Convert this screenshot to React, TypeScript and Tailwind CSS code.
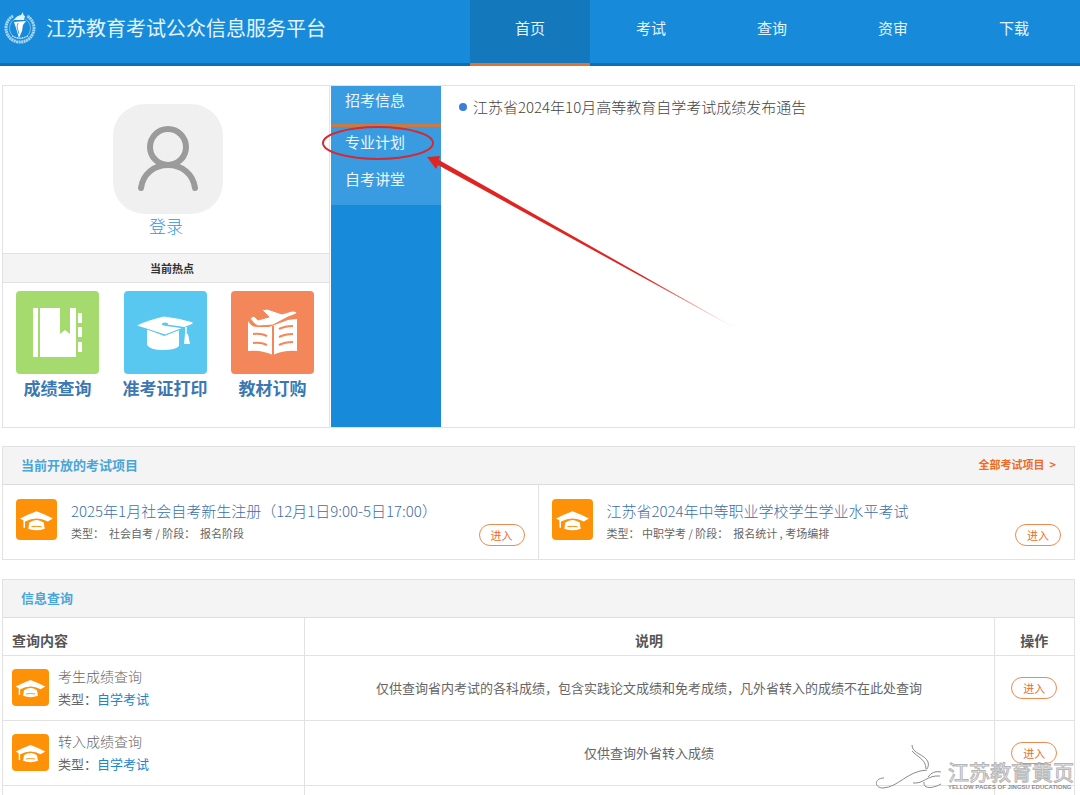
import clsx from "clsx";

type IconProps = { className?: string };

const navItems = ["首页", "考试", "查询", "资审", "下载"];

const sideItems = ["招考信息", "专业计划", "自考讲堂"];

const projects = [
  {
    title: "2025年1月社会自考新生注册（12月1日9:00-5日17:00）",
    kind: " 社会自考",
    stage: "报名阶段",
  },
  {
    title: "江苏省2024年中等职业学校学生学业水平考试",
    kind: "中职学考",
    stage: "报名统计 , 考场编排",
  },
];

const queries = [
  {
    name: "考生成绩查询",
    note: "仅供查询省内考试的各科成绩，包含实践论文成绩和免考成绩，凡外省转入的成绩不在此处查询",
  },
  { name: "转入成绩查询", note: "仅供查询外省转入成绩" },
];

function Emblem({ className }: IconProps) {
  return (
    <svg viewBox="0 0 32 34" className={className} fill="none" aria-hidden="true">
      <path d="M9 5A14 14 0 1 0 23 5" stroke="#a9d6f5" strokeWidth="3" strokeDasharray="2 0.5" />
      <path d="M11 8A10.500 10.500 0 1 0 21 8" stroke="#7dbdec" strokeWidth="1" />
      <path d="M8 25q8 4 16 0" stroke="#cfe9fb" strokeWidth="1.200" strokeDasharray="1.500 1" />
      <path d="M10 11l12-1-3 4-1 6-3 7-3-10z" fill="#fff" />
      <path d="M14 12l-1 4 2 7" stroke="#178bda" strokeWidth="0.800" />
      <path d="M10 9q2-4 7-5l2-3q0 4 2 4l-1 4z" fill="#e3f3fd" />
    </svg>
  );
}

function UserIcon({ className }: IconProps) {
  return (
    <svg viewBox="0 0 60 66" className={className} fill="none" stroke="#9b9b9b" strokeWidth="6" aria-hidden="true">
      <circle cx="30" cy="21" r="18" />
      <path d="M3 62C5 48 16 39 30 39s25 9 27 23" strokeLinecap="round" />
    </svg>
  );
}

function NotebookIcon({ className }: IconProps) {
  return (
    <svg viewBox="0 0 83 83" className={className} fill="#fff" aria-hidden="true">
      <path d="M17 17h5v49h-5zM24 17h20v26l5-4 5 4V17h6v49H24z" />
      <path d="M62 22h4v10h-4zM62 36h4v10h-4zM62 51h4v10h-4z" />
    </svg>
  );
}

function CapIcon({ className }: IconProps) {
  return (
    <svg viewBox="0 0 83 83" className={className} aria-hidden="true">
      <path d="M23 38l17 7 15-6v16q-3 4-16 4t-16-5z" fill="#fff" />
      <path d="M13 34q10-5 27-9 17 2 29 6v2q-12 5-28 11-15-5-28-9z" fill="#fff" stroke="#58c8f0" />
      <path d="M41 34l21 3" stroke="#58c8f0" strokeWidth="1.500" />
      <ellipse cx="41" cy="33" rx="3" ry="1.500" fill="#58c8f0" />
      <path d="M62 36v8" stroke="#fff" strokeWidth="1.500" />
      <path d="M61 43h3l2 10h-6z" fill="#fff" />
    </svg>
  );
}

function BookIcon({ className }: IconProps) {
  return (
    <svg viewBox="0 0 83 83" className={className} aria-hidden="true">
      <path d="M17 30q3 6 9 6h12l19-7 9-1v32q-13-1-24 4-11-5-25-4z" fill="#fff" />
      <path
        d="M42 35v29M22 43q8-1 14 2M22 52q8-1 14 2M62 35q-8 0-14 3M62 43q-8 0-14 3M62 51q-8 0-14 3"
        fill="none"
        stroke="#f4875a"
        strokeWidth="2"
      />
      <path
        d="M19 27l4-2 4 4 11-3-7-7 5-1 15 5 10-3q6 0 4 3l-8 3-15 8-15 1q-5-2-8-8z"
        fill="#fff"
        stroke="#f4875a"
        strokeWidth="1"
      />
    </svg>
  );
}

function CapBadge({ className }: IconProps) {
  return (
    <svg viewBox="0 0 40 40" className={clsx("shrink-0 rounded bg-[#fd9208]", className)} aria-hidden="true">
      <path d="M4 19q8-4 16-7 8 3 16 7l-5 3q-11-6-22 0z" fill="#fff" />
      <path d="M8 20v8" stroke="#fff" strokeWidth="1.500" />
      <path d="M13 23q7-5 14 0l1 6q-8 3-16 0z" fill="#fff" />
      <path d="M15 27q5-1 10 0" fill="none" stroke="#fd9208" />
    </svg>
  );
}

const hotItems = [
  { label: "成绩查询", color: "bg-[#a4da6e]", Icon: NotebookIcon },
  { label: "准考证打印", color: "bg-[#58c8f0]", Icon: CapIcon },
  { label: "教材订购", color: "bg-[#f4875a]", Icon: BookIcon },
];

function EnterButton() {
  return (
    <button className="h-[22px] w-[46px] shrink-0 rounded-full border border-[#ee8a50] text-[11px] leading-4 text-[#ee6a28]">
      进入
    </button>
  );
}

function Header() {
  return (
    <header className="flex h-[66px] justify-between border-b-3 border-[#0f6fb5] bg-[#178bda]">
      <div className="flex h-14 items-center gap-2.5 pl-1">
        <Emblem className="h-[34px] w-8" />
        <h1 className="text-xl text-[#e4f4ff]">江苏教育考试公众信息服务平台</h1>
      </div>
      <nav className="-mb-[3px] flex gap-px pr-1.5">
        {navItems.map((item, i) => (
          <a
            key={item}
            href="#"
            className={clsx(
              "w-[120px] border-b-3 pt-4 text-center text-[15px] leading-6 text-[#e4f4ff]",
              i === 0 ? "border-[#dd7436] bg-[#1478bc]" : "border-transparent",
            )}
          >
            {item}
          </a>
        ))}
      </nav>
    </header>
  );
}

function UserPanel() {
  return (
    <div className="mr-px flex w-[327px] shrink-0 flex-col border-r border-[#e2e2e2]">
      <div className="flex h-[167px] flex-col items-center pt-[18px] pl-1">
        <div className="flex size-[110px] items-center justify-center rounded-[32px] bg-[#f0f0f0]">
          <UserIcon className="h-[66px] w-15" />
        </div>
        <a href="#" className="pr-1 text-[17px] leading-6 font-light text-[#2f96d6]">登录</a>
      </div>
      <h2 className="border-y border-[#e2e2e2] bg-[#f4f4f4] pl-3 text-center text-[11px] leading-7 font-bold text-[#333]">
        当前热点
      </h2>
      <ul className="flex justify-between pt-2 pr-3.5 pl-3">
        {hotItems.map(({ label, color, Icon }) => (
          <li key={label}>
            <a href="#" className="flex w-[85px] flex-col items-center">
              <Icon className={clsx("size-[83px] rounded", color)} />
              <span className="text-[17px] leading-7 font-bold whitespace-nowrap text-[#3b78b2]">{label}</span>
            </a>
          </li>
        ))}
      </ul>
    </div>
  );
}

/* Hand-drawn ring and arrow that point out the plan entry */
function Marker() {
  return (
    <svg viewBox="0 0 420 210" className="pointer-events-none absolute top-10 -left-2.5 h-[210px] w-[420px]" aria-hidden="true">
      <defs>
        <linearGradient id="fade" x1="0" y1="0" x2="1" y2="0">
          <stop offset="0.700" stopColor="#e0241f" />
          <stop offset="1" stopColor="#e0241f" stopOpacity="0.300" />
        </linearGradient>
      </defs>
      <ellipse cx="57" cy="17" rx="55" ry="16" fill="none" stroke="#d42a33" strokeWidth="2" />
      <path d="M106 31l13-1-1 4L414 202 117 39l-2 4z" fill="url(#fade)" />
    </svg>
  );
}

function TopPanel() {
  return (
    <section className="mt-[19px] flex h-[343px] border border-[#e2e2e2]">
      <UserPanel />
      <div className="relative w-[110px] shrink-0 bg-[#178bda]">
        <ul className="bg-[#3a9ce0] pb-1">
          {sideItems.map((item, i) => (
            <li key={item} className={clsx(i === 0 && "border-b-3 border-[#c97a45]")}>
              <a
                href="#"
                className={clsx(
                  "block pl-3.5 text-[15px] text-[#eaf6ff]",
                  i === 0 ? "pb-2.5 leading-7" : "h-[37px] leading-[30px]",
                )}
              >
                {item}
              </a>
            </li>
          ))}
        </ul>
        <Marker />
      </div>
      <ul className="pt-2.5 pl-[18px]">
        <li className="flex items-center gap-1.5">
          <span className="size-2 rounded-full bg-[#3b7ddd]" />
          <a href="#" className="text-[15px] leading-[22px] font-light text-[#444]">
            江苏省2024年10月高等教育自学考试成绩发布通告
          </a>
        </li>
      </ul>
    </section>
  );
}

function SectionTitle({ title, more }: { title: string; more?: string }) {
  return (
    <div className="flex h-[38px] items-center justify-between border-b border-[#dcdcdc] bg-[#f4f4f4] px-[18px] pb-0.5">
      <h2 className="text-[13px] font-bold text-[#4aa5d9]">{title}</h2>
      {more && (
        <a href="#" className="text-[11px] font-bold text-[#ee6a28]">
          {more} &nbsp;&gt;
        </a>
      )}
    </div>
  );
}

function ProjectPanel() {
  return (
    <section className="mt-[18px] border border-[#e2e2e2]">
      <SectionTitle title="当前开放的考试项目" more="全部考试项目" />
      <div className="grid grid-cols-2 divide-x divide-[#e2e2e2]">
        {projects.map((p) => (
          <article key={p.title} className="flex h-[74px] px-[13px] pt-3.5">
            <CapBadge className="size-[41px]" />
            <div className="grow pl-3.5">
              <h3 className="h-[23px] text-[15px] leading-6 font-light">
                <a href="#" className="whitespace-nowrap text-[#3b6fa8]">{p.title}</a>
              </h3>
              <p className="text-[11px] leading-[22px] text-[#666] whitespace-pre">
                类型： {p.kind} / 阶段：  {p.stage}
              </p>
            </div>
            <div className="-ml-10 pt-[22px]">
              <EnterButton />
            </div>
          </article>
        ))}
      </div>
    </section>
  );
}

function QueryPanel() {
  return (
    <section className="mt-[19px] border border-[#e2e2e2]">
      <SectionTitle title="信息查询" />
      <table className="w-full table-fixed border-collapse text-[13px] text-[#666]">
        <colgroup>
          <col className="w-[301px]" />
          <col />
          <col className="w-20" />
        </colgroup>
        <thead>
          <tr className="h-[37px] border-b border-[#e2e2e2] text-sm text-[#555]">
            <th className="border-r border-[#e2e2e2] pt-2 pl-[9px] text-left">查询内容</th>
            <th className="border-r border-[#e2e2e2] pt-2">说明</th>
            <th className="pt-2">操作</th>
          </tr>
        </thead>
        <tbody>
          {queries.map((q) => (
            <tr key={q.name} className="h-[65px] border-b border-[#e2e2e2]">
              <td className="border-r border-[#e2e2e2] pl-[9px]">
                <div className="flex items-center gap-[9px]">
                  <CapBadge className="size-[37px]" />
                  <div className="pb-0.5">
                    <div className="text-sm leading-6 font-light">{q.name}</div>
                    <div className="leading-[22px]">
                      类型：<a href="#" className="text-[#1b86cd]">自学考试</a>
                    </div>
                  </div>
                </div>
              </td>
              <td className="border-r border-[#e2e2e2] text-center">{q.note}</td>
              <td className="text-center">
                <EnterButton />
              </td>
            </tr>
          ))}
          <tr className="h-[65px]">
            <td className="border-r border-[#e2e2e2]" />
            <td className="border-r border-[#e2e2e2]" />
            <td />
          </tr>
        </tbody>
      </table>
    </section>
  );
}

function Watermark() {
  return (
    <div className="pointer-events-none absolute right-1.5 bottom-1 flex items-end gap-1.5">
      <svg viewBox="0 0 72 48" className="h-12 w-18" fill="none" stroke="#8a8a8a" aria-hidden="true">
        <path d="M42 2c0 9 13 9 16 17 1 3 0 5-1 7M42 8c5 6 14 8 14 18" />
        <path d="M14 35C4 35 4 45 13 45c16-1 24-17 44-18M71 29q-8-2-13 5M70 33c-13-1-16 8-27 7M54 39c-1 7 8 7 17 2" />
      </svg>
      <div className="flex flex-col">
        <span className="text-[21px] leading-6 text-white/50 [-webkit-text-stroke:1px_#b4b4b4]">江苏教育黄页</span>
        <span className="font-['Liberation_Sans',sans-serif] text-[6px] leading-2 font-bold whitespace-nowrap text-[#8a8a8a]">
          YELLOW PAGES OF JINGSU EDUCATIONG
        </span>
      </div>
    </div>
  );
}

export default function App() {
  return (
    <div className="relative h-screen overflow-hidden bg-white font-['Noto_Sans_CJK_SC',sans-serif]">
      <Header />
      <main className="pr-[5px] pl-0.5">
        <TopPanel />
        <ProjectPanel />
        <QueryPanel />
      </main>
      <Watermark />
    </div>
  );
}
